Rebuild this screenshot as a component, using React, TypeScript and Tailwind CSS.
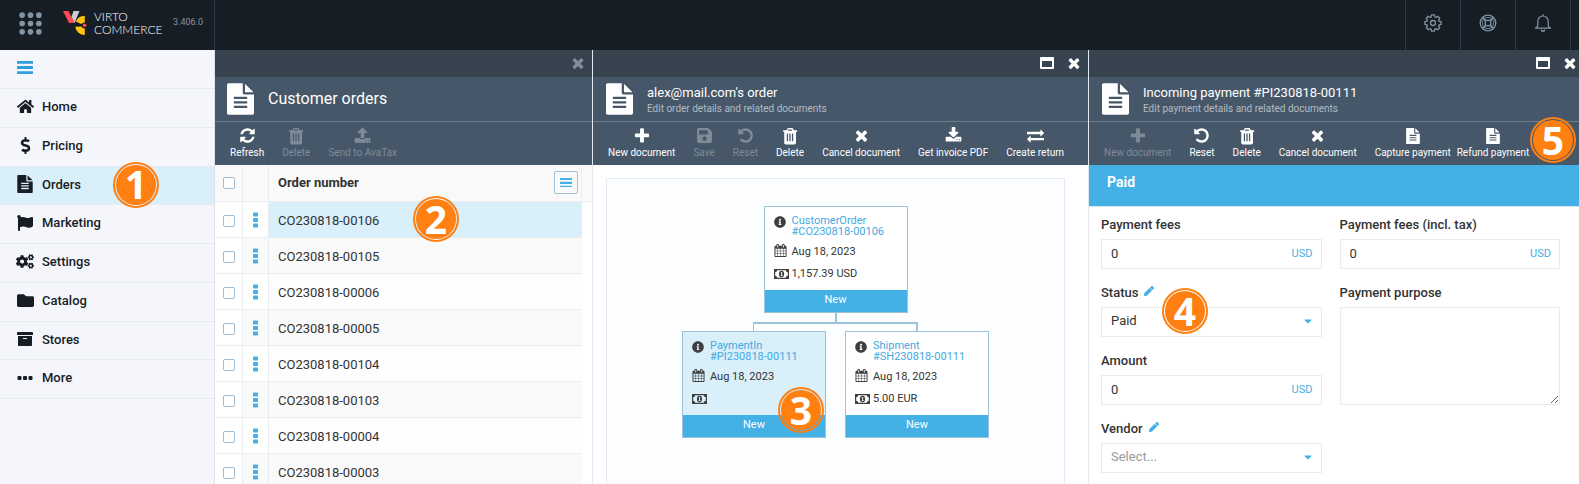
import React from "react";
import {
  FaArchive, FaCaretDown, FaCogs, FaDollarSign, FaFlag, FaFolder, FaHome, FaInfoCircle, FaPen, FaSave,
} from "react-icons/fa";

type IconProps = { className?: string };

const glyph = (d: string) =>
  function Glyph({ className }: IconProps) {
    return (
      <svg viewBox="0 0 1792 1792" fill="currentColor" className={className} aria-hidden="true">
        <path d={d} />
      </svg>
    );
  };

const Refresh = glyph("M1639 1056q0 5-1 7-64 268-268 434.5t-478 166.5q-146 0-282.5-55t-243.5-157l-129 129q-19 19-45 19t-45-19-19-45v-448q0-26 19-45t45-19h448q26 0 45 19t19 45-19 45l-137 137q71 66 161 102t187 36q134 0 250-65t186-179q11-17 53-117 8-23 30-23h192q13 0 22.5 9.5t9.5 22.5zm25-800v448q0 26-19 45t-45 19h-448q-26 0-45-19t-19-45 19-45l138-138q-148-137-349-137-134 0-250 65t-186 179q-11 17-53 117-8 23-30 23h-199q-13 0-22.5-9.5t-9.5-22.5v-7q65-268 270-434.5t480-166.5q146 0 284 55.5t245 156.5l130-129q19-19 45-19t45 19 19 45z");
const Plus = glyph("M1600 736v192q0 40-28 68t-68 28h-416v416q0 40-28 68t-68 28h-192q-40 0-68-28t-28-68v-416h-416q-40 0-68-28t-28-68v-192q0-40 28-68t68-28h416v-416q0-40 28-68t68-28h192q40 0 68 28t28 68v416h416q40 0 68 28t28 68z");
const Undo = glyph("M1664 896q0 156-61 298t-164 245-245 164-298 61q-172 0-327-72.5t-264-204.5q-7-10-6.5-22.5t8.5-20.5l137-138q10-9 25-9 16 2 23 12 73 95 179 147t225 52q104 0 198.5-40.5t163.5-109.5 109.5-163.5 40.5-198.5-40.5-198.5-109.5-163.5-163.5-109.5-198.5-40.5q-98 0-188 35.5t-160 101.5l137 138q31 30 14 69-17 40-59 40h-448q-26 0-45-19t-19-45v-448q0-42 40-59 39-17 69 14l130 129q107-101 244.5-156.5t284.5-55.5q156 0 298 61t245 164 164 245 61 298z");
const Times = glyph("M1490 1322q0 40-28 68l-136 136q-28 28-68 28t-68-28l-294-294-294 294q-28 28-68 28t-68-28l-136-136q-28-28-28-68t28-68l294-294-294-294q-28-28-28-68t28-68l136-136q28-28 68-28t68 28l294 294 294-294q28-28 68-28t68 28l136 136q28 28 28 68t-28 68l-294 294 294 294q28 28 28 68z");
const Trash = glyph("M704 1376v-704q0-14-9-23t-23-9h-64q-14 0-23 9t-9 23v704q0 14 9 23t23 9h64q14 0 23-9t9-23zm256 0v-704q0-14-9-23t-23-9h-64q-14 0-23 9t-9 23v704q0 14 9 23t23 9h64q14 0 23-9t9-23zm256 0v-704q0-14-9-23t-23-9h-64q-14 0-23 9t-9 23v704q0 14 9 23t23 9h64q14 0 23-9t9-23zm-544-992h448l-48-117q-7-9-17-11h-317q-10 2-17 11zm928 -30v114q0 14-9 23t-23 9h-76v1078q0 83-47 123.5t-113 40.5h-848q-66 0-113-38.5t-47-121.5v-1082h-76q-14 0-23-9t-9-23v-114q0-14 9-23t23-9h309l70-127q15-37 54-63t79-26h320q40 0 79 26t54 63l70 127h309q14 0 23 9t9 23z");
const Download = glyph("M1344 1344q0-26-19-45t-45-19-45 19-19 45 19 45 45 19 45-19 19-45zm256 0q0-26-19-45t-45-19-45 19-19 45 19 45 45 19 45-19 19-45zm128-224v320q0 40-28 68t-68 28h-1472q-40 0-68-28t-28-68v-320q0-40 28-68t68-28h465l135 136q58 56 136 56t136-56l136-136h464q40 0 68 28t28 68zm-325-569q17 41-14 70l-448 448q-18 19-45 19t-45-19l-448-448q-31-29-14-70 17-39 59-39h256v-448q0-26 19-45t45-19h256q26 0 45 19t19 45v448h256q42 0 59 39z");
const Upload = glyph("M1344 1472q0-26-19-45t-45-19-45 19-19 45 19 45 45 19 45-19 19-45zm256 0q0-26-19-45t-45-19-45 19-19 45 19 45 45 19 45-19 19-45zm128-224v320q0 40-28 68t-68 28h-1472q-40 0-68-28t-28-68v-320q0-40 28-68t68-28h427q21 56 70.5 92t110.5 36h256q61 0 110.5-36t70.5-92h427q40 0 68 28t28 68zm-325-648q-17 40-59 40h-256v448q0 26-19 45t-45 19h-256q-26 0-45-19t-19-45v-448h-256q-42 0-59-40-17-39 14-69l448-448q18-19 45-19t45 19l448 448q31 30 14 69z");
const Exchange = glyph("M1792 1184v192q0 13-9.5 22.5t-22.5 9.5h-1376v192q0 13-9.5 22.5t-22.5 9.5q-12 0-24-10l-319-320q-9-9-9-22 0-14 9-23l320-320q9-9 23-9 13 0 22.5 9.5t9.5 22.5v192h1376q13 0 22.5 9.5t9.5 22.5zm0-544q0 14-9 23l-320 320q-9 9-23 9-13 0-22.5-9.5t-9.5-22.5v-192h-1376q-13 0-22.5-9.5t-9.5-22.5v-192q0-13 9.5-22.5t22.5-9.5h1376v-192q0-14 9-23t23-9q12 0 24 10l319 319q9 9 9 23z");
const Calendar = glyph("M192 1664h288v-288h-288v288zm352 0h320v-288h-320v288zm-352-352h288v-320h-288v320zm352 0h320v-320h-320v320zm-352-384h288v-288h-288v288zm736 736h320v-288h-320v288zm-384-736h320v-288h-320v288zm768 736h288v-288h-288v288zm-384-352h320v-320h-320v320zm-352-864v-288q0-13-9.5-22.5t-22.5-9.5h-64q-13 0-22.5 9.5t-9.5 22.5v288q0 13 9.5 22.5t22.5 9.5h64q13 0 22.5-9.5t9.5-22.5zm736 864h288v-320h-288v320zm-384-384h320v-288h-320v288zm384 0h288v-288h-288v288zm32-480v-288q0-13-9.5-22.5t-22.5-9.5h-64q-13 0-22.5 9.5t-9.5 22.5v288q0 13 9.5 22.5t22.5 9.5h64q13 0 22.5-9.5t9.5-22.5zm384-64v1280q0 52-38 90t-90 38h-1408q-52 0-90-38t-38-90v-1280q0-52 38-90t90-38h128v-96q0-66 47-113t113-47h64q66 0 113 47t47 113v96h384v-96q0-66 47-113t113-47h64q66 0 113 47t47 113v96h128q52 0 90 38t38 90z");

function FileText({ className }: IconProps) {
  return (
    <svg viewBox="128 0 1536 1792" fill="currentColor" className={className} aria-hidden="true">
      <path d="M1596 476q14 14 28 36h-472v-472q22 14 36 28zm-476 164h544v1056q0 40-28 68t-68 28h-1344q-40 0-68-28t-28-68v-1600q0-40 28-68t68-28h800v544q0 40 28 68t68 28zm160 736v-64q0-14-9-23t-23-9h-704q-14 0-23 9t-9 23v64q0 14 9 23t23 9h704q14 0 23-9t9-23zm0-256v-64q0-14-9-23t-23-9h-704q-14 0-23 9t-9 23v64q0 14 9 23t23 9h704q14 0 23-9t9-23zm0-256v-64q0-14-9-23t-23-9h-704q-14 0-23 9t-9 23v64q0 14 9 23t23 9h704q14 0 23-9t9-23z" />
    </svg>
  );
}

function Money({ className }: IconProps) {
  return (
    <svg viewBox="0 0 15 10" className={className} aria-hidden="true">
      <path fill="none" stroke="currentColor" strokeWidth="1.2" d="M.6.6h13.8v8.8H.6z" />
      <path fill="currentColor" d="M1 1h2.2A2.2 2.2 0 0 1 1 3.200zM14 1h-2.200A2.200 2.200 0 0 0 14 3.200zM1 9h2.200A2.200 2.200 0 0 0 1 6.800zM14 9h-2.200A2.200 2.200 0 0 1 14 6.800z" />
      <ellipse cx="7.500" cy="5" rx="2.600" ry="3.300" fill="currentColor" />
      <path fill="#fff" d="M7.200 3.100h.9v3.200h.6v.7H6.700v-.7h.6V4.200h-.6z" />
    </svg>
  );
}

function Dots({ className }: IconProps) {
  return (
    <svg viewBox="0 0 16 4" fill="currentColor" className={className} aria-hidden="true">
      <rect x="0.500" width="4" height="4" rx="1" />
      <rect x="6" width="4" height="4" rx="1" />
      <rect x="11.500" width="4" height="4" rx="1" />
    </svg>
  );
}

function VerticalDots({ className }: IconProps) {
  return (
    <svg viewBox="0 0 5 16" fill="currentColor" className={className} aria-hidden="true">
      <rect width="5" height="4" rx=".8" y=".5" />
      <rect width="5" height="4" rx=".8" y="6" />
      <rect width="5" height="4" rx=".8" y="11.500" />
    </svg>
  );
}

function Bars({ className }: IconProps) {
  return (
    <svg viewBox="0 0 16 13" fill="currentColor" className={className} aria-hidden="true">
      <rect width="16" height="2.800" rx=".4" />
      <rect y="5.100" width="16" height="2.800" rx=".4" />
      <rect y="10.200" width="16" height="2.800" rx=".4" />
    </svg>
  );
}

function Maximize({ className }: IconProps) {
  return (
    <svg viewBox="0 0 14 12" fill="currentColor" fillRule="evenodd" className={className} aria-hidden="true">
      <path d="M1 0h12a1 1 0 0 1 1 1v10a1 1 0 0 1-1 1H1a1 1 0 0 1-1-1V1a1 1 0 0 1 1-1zm1 4v6h10V4z" />
    </svg>
  );
}

function AppsGrid({ className }: IconProps) {
  return (
    <svg viewBox="0 0 22 22" fill="currentColor" className={className} aria-hidden="true">
      {[3, 11, 19].map((y) => [3, 11, 19].map((x) => <circle key={`${x}-${y}`} cx={x} cy={y} r="2.700" />))}
    </svg>
  );
}

const gearOutline = Array.from({ length: 8 }, (_, k) =>
  [[-17, 6.3], [-10, 8.2], [10, 8.2], [17, 6.3]]
    .map(([a, r]) => {
      const t = ((k * 45 + a) * Math.PI) / 180;
      return `${(r * Math.cos(t)).toFixed(2)},${(r * Math.sin(t)).toFixed(2)}`;
    })
    .join(" "),
).join(" ");

function Gear({ className }: IconProps) {
  return (
    <svg viewBox="-9 -9 18 18" fill="none" stroke="currentColor" strokeWidth="1.300" strokeLinejoin="round" className={className} aria-hidden="true">
      <polygon points={gearOutline} />
      <circle r="2.500" />
    </svg>
  );
}

function LifeBuoy({ className }: IconProps) {
  return (
    <svg viewBox="-9 -9 18 18" fill="none" stroke="currentColor" strokeWidth="1.300" className={className} aria-hidden="true">
      <circle r="7.800" />
      <rect x="-2.700" y="-2.700" width="5.400" height="5.400" rx="1.600" />
      <path d="M-3.200-5Q0-6.200 3.200-5M-3.200 5Q0 6.200 3.200 5M-5-3.200Q-6.200 0-5 3.200M5-3.200Q6.200 0 5 3.200" strokeWidth=".8" />
      <path d="M-5.300-5.300l3 3M5.300-5.300l-3 3M-5.300 5.300l3-3M5.300 5.300l-3-3" strokeWidth="1.800" />
    </svg>
  );
}

function Bell({ className }: IconProps) {
  return (
    <svg viewBox="-9 -9 18 18" fill="none" stroke="currentColor" strokeWidth="1.200" strokeLinecap="round" strokeLinejoin="round" className={className} aria-hidden="true">
      <path d="M0-8.300v1.300M-7.700 5.200H7.700C6 4.600 5.200 3.200 5.200 1.500V-1.800a5.200 5.200 0 0 0-10.400 0V1.500C-5.200 3.200-6 4.600-7.700 5.200z" />
      <path d="M-1.600 7.200q1.600 2 3.200 0" strokeWidth="1.500" />
    </svg>
  );
}

function LogoMark({ className }: IconProps) {
  return (
    <svg viewBox="0 0 24 24" className={className} aria-hidden="true">
      <path fill="#ff4a4f" d="M0 0h5.500l6 12H6z" />
      <path fill="#c9ced2" d="M10.500 0H16.500l-5 12-3-6.300z" />
      <path fill="#ffc20e" d="M21.800 5v6.500a3.600 3.600 0 0 0-3.400 1.500l-5.600-2.600A9.500 9.500 0 0 1 21.800 5z" />
      <path fill="#ffc20e" d="M21.800 24v-6.500a3.600 3.600 0 0 1-3.400-1.900l-6.200.2A9.600 9.600 0 0 0 21.800 24z" />
      <circle cx="21.600" cy="14.300" r="1.800" fill="#ff4a4f" />
    </svg>
  );
}

function Badge({ n, className }: { n: number; className: string }) {
  return (
    <span className={`absolute z-10 size-[46px] rounded-full border-2 border-[#ff7f11] p-px ${className}`}>
      <span className="flex size-full items-center justify-center rounded-full bg-[#ff7f11] pb-[2px] font-['Open_Sans',sans-serif] text-[39px] leading-none font-bold text-white">
        {n}
      </span>
    </span>
  );
}

const nav = [
  { label: "Home", icon: <FaHome className="size-[17px]" /> },
  { label: "Pricing", icon: <FaDollarSign className="size-[17px]" /> },
  { label: "Orders", icon: <FileText className="h-[18px] w-4" />, active: true },
  { label: "Marketing", icon: <FaFlag className="size-4" /> },
  { label: "Settings", icon: <FaCogs className="size-[19px]" /> },
  { label: "Catalog", icon: <FaFolder className="size-[17px]" /> },
  { label: "Stores", icon: <FaArchive className="size-4" /> },
  { label: "More", icon: <Dots className="w-4" /> },
];

type Action = { label: string; icon: React.ReactNode; off?: boolean };

const doc = <FileText className="h-4 w-[14px]" />;
const cross = <Times className="size-[17px]" />;
const trash = <Trash className="size-[18px]" />;
const plus = <Plus className="size-[18px]" />;
const undo = <Undo className="size-[17px]" />;

function Blade({ className, tools = "pr-[6px]", title, subtitle, actions, actionsEnd, closeOff, children }: {
  className: string; tools?: string; title: string; subtitle?: string; actions: Action[]; actionsEnd?: React.ReactNode; closeOff?: boolean; children: React.ReactNode;
}) {
  return (
    <section className={`flex min-w-0 flex-col border-r border-[#e4e9f0] bg-white ${className}`}>
      <div className={`flex h-[27px] shrink-0 items-center justify-end gap-3 bg-[#37444f] pb-[2px] text-white ${tools}`}>
        {!closeOff && (
          <button aria-label="Maximize"><Maximize className="h-3 w-[14px]" /></button>
        )}
        <button aria-label="Close" className={closeOff ? "text-[#838e98]" : ""}><Times className="size-4" /></button>
      </div>
      <header className={`flex h-[45px] shrink-0 items-center gap-[14px] border-b border-[#6b7c8b] bg-[#465769] text-white ${subtitle ? "px-[13px]" : "px-3"}`}>
        <FileText className="h-8 w-[27px]" />
        {subtitle ? (
          <div className="pt-1">
            <h2 className="text-[13px] leading-4">{title}</h2>
            <p className="text-[10px] leading-4 text-[#b3bbc3]">{subtitle}</p>
          </div>
        ) : (
          <h2 className="text-base">{title}</h2>
        )}
      </header>
      <div className="relative flex h-[43px] shrink-0 gap-[18px] bg-[#465769] px-[15px] pt-1 text-[10px] whitespace-nowrap">
        {actions.map((a) => (
          <button key={a.label} disabled={a.off} className={`flex flex-col items-center leading-4 ${a.off ? "text-[#7f8b97]" : "text-white"}`}>
            <span className="flex h-[19px] items-center">{a.icon}</span>
            {a.label}
          </button>
        ))}
        {actionsEnd}
      </div>
      {children}
    </section>
  );
}

const orders = ["CO230818-00106", "CO230818-00105", "CO230818-00006", "CO230818-00005", "CO230818-00104", "CO230818-00103", "CO230818-00004", "CO230818-00003"];

const checkbox = "block size-3 appearance-none rounded-[2px] border border-[#9dbdd6] bg-white";

function OrdersTable() {
  return (
    <div className="relative min-h-0 flex-1 overflow-hidden">
      <table className="w-full table-fixed border-separate border-spacing-0 text-left text-[13px] text-[#333]">
        <colgroup>
          <col className="w-7" />
          <col className="w-[26px]" />
          <col />
          <col className="w-[10px]" />
        </colgroup>
        <thead className="bg-[#f9f9f9]">
          <tr>
            <th className="h-[37px] border-r border-b border-[#eaedf3] pb-px pl-2"><input type="checkbox" aria-label="Select all" className={checkbox} /></th>
            <th className="border-r border-b border-[#eaedf3]" />
            <th className="border-r border-b border-[#eaedf3] pr-[3px] pb-px pl-[9px] font-bold">
              <div className="flex items-center justify-between">
                Order number
                <button aria-label="Columns" className="flex h-[23px] w-6 items-center justify-center rounded-[2px] border border-[#9dc3da] text-[#43b0e6]">
                  <Bars className="w-3" />
                </button>
              </div>
            </th>
            <th className="border-b border-[#eaedf3]" />
          </tr>
        </thead>
        <tbody>
          {orders.map((o, i) => (
            <tr key={o}>
              <td className="h-9 border-r border-b border-[#eaedf3] pt-[3px] pl-2"><input type="checkbox" aria-label={`Select ${o}`} className={checkbox} /></td>
              <td className={`border-r border-b border-[#eaedf3] ${i % 2 ? "bg-[#f9f9f9]" : "bg-white"}`}>
                <button aria-label={`Actions for ${o}`} className="mx-auto block text-[#43b0e6]"><VerticalDots className="h-4 w-[5px]" /></button>
              </td>
              <td className={`border-b border-[#eaedf3] pt-[3px] pl-[9px] ${i === 0 ? "bg-[#d9effa]" : i % 2 ? "bg-[#f9f9f9]" : "bg-[#fdfdfd]"}`}>{o}</td>
              <td />
            </tr>
          ))}
        </tbody>
      </table>
      <Badge n={2} className="top-[31px] left-[198px]" />
    </div>
  );
}

function Card({ kind, no, sum, active, children }: { kind: string; no: string; sum?: string; active?: boolean; children?: React.ReactNode }) {
  return (
    <article className={`relative w-36 border border-[#9cc3da] text-[11px] text-[#333] ${active ? "bg-[#d9effa]" : "bg-white"}`}>
      <div className="grid grid-cols-[18px_1fr] items-center pt-2 pl-[9px]">
        <FaInfoCircle className="mt-px size-[12px] self-start text-[#3f3f3f]" />
        <a href="#" className="leading-[11px] text-[#43a9e0]">{kind}<br />{no}</a>
        <Calendar className="size-[13px] text-[#3f3f3f]" />
        <span className="mt-1 flex h-[22px] items-center">Aug 18, 2023</span>
        <Money className="h-[10px] w-[15px] text-[#3f3f3f]" />
        <span className="flex h-[22px] items-center">{sum}</span>
      </div>
      <footer className="mt-[5px] h-[22px] bg-[#43b0e6] text-center leading-[19px] text-white">New</footer>
      {children}
    </article>
  );
}

const box = "w-full border border-[#e8eaf3] bg-white";

function Field({ id, label, edit, className = "", children }: { id: string; label: string; edit?: boolean; className?: string; children: React.ReactNode }) {
  return (
    <div className={`relative flex flex-col ${className}`}>
      <div className="flex h-[23px] items-start gap-[6px] leading-[18px]">
        <label htmlFor={id} className="font-medium">{label}</label>
        {edit && <button aria-label={`Edit ${label}`} className="pt-[2px] text-[#43b0e6]"><FaPen className="size-[10px]" /></button>}
      </div>
      {children}
    </div>
  );
}

function MoneyInput({ id }: { id: string }) {
  return (
    <div className={`flex h-[30px] items-center pr-2 pl-[9px] ${box}`}>
      <input id={id} defaultValue="0" className="w-full min-w-0 flex-1 pb-px outline-none" />
      <span className="text-[11px] text-[#43b0e6]">USD</span>
    </div>
  );
}

function Picker({ id, value, muted }: { id: string; value: string; muted?: boolean }) {
  return (
    <div className="relative">
      <select id={id} className={`h-[30px] appearance-none px-[9px] pb-[2px] ${box} ${muted ? "text-[#999]" : ""}`}>
        <option>{value}</option>
      </select>
      <FaCaretDown className="pointer-events-none absolute top-[8px] right-2 size-3 text-[#43b0e6]" />
    </div>
  );
}

export default function App() {
  return (
    <div className="flex h-screen flex-col overflow-hidden bg-white font-[Roboto,sans-serif] text-[13px] text-[#333]">
      <div className="flex h-[50px] shrink-0 bg-[#161d25] text-[#8394a5]">
        <div className="flex w-[215px] items-center border-r border-[#2c3947] pr-[11px] pb-1 pl-[19px]">
          <button aria-label="Applications"><AppsGrid className="size-[23px]" /></button>
          <LogoMark className="ml-[21px] size-6" />
          <span className="ml-[7px] font-[Lato,sans-serif] text-[12px] leading-[13px] font-light text-white">VIRTO<br />COMMERCE</span>
          <span className="ml-auto text-[9px]">3.406.0</span>
        </div>
        <div className="ml-auto flex pr-2">
          <button aria-label="Settings" className="flex w-[55px] items-center justify-center border-l border-[#2c3947] pb-1"><Gear className="size-[18px]" /></button>
          <button aria-label="Help" className="flex w-[55px] items-center justify-center border-l border-[#2c3947] pb-1"><LifeBuoy className="size-[18px]" /></button>
          <button aria-label="Notifications" className="flex w-14 items-center justify-center border-x border-[#2c3947] pb-1"><Bell className="size-[18px]" /></button>
        </div>
      </div>

      <div className="flex min-h-0 flex-1">
        <nav className="w-[215px] shrink-0 border-r border-[#dde3ea] bg-[#f4f6fb] text-[#161d25]">
          <div className="flex h-[39px] items-center border-b border-[#e8eaf2] pb-[3px] pl-[17px]">
            <button aria-label="Toggle menu" className="text-[#2f9fdb]"><Bars className="w-4" /></button>
          </div>
          <ul className="grid h-[310px] grid-rows-8 font-medium">
            {nav.map((n) => (
              <li key={n.label} className={`relative border-b border-[#e8eaf2] ${n.active ? "bg-[#d9effa]" : ""}`}>
                <a href="#" className="flex h-full items-center gap-2 pb-[2px] pl-4">
                  <span className="flex w-[18px] justify-center">{n.icon}</span>
                  {n.label}
                </a>
                {n.active && <Badge n={1} className="-top-[5px] left-[113px]" />}
              </li>
            ))}
          </ul>
        </nav>

        <Blade
          className="w-[378px] shrink-0"
          title="Customer orders"
          closeOff
          actions={[
            { label: "Refresh", icon: <Refresh className="size-[17px]" /> },
            { label: "Delete", icon: trash, off: true },
            { label: "Send to AvaTax", icon: <Upload className="size-[17px]" />, off: true },
          ]}
        >
          <OrdersTable />
        </Blade>

        <Blade
          className="w-[496px] shrink-0"
          title="alex@mail.com's order"
          subtitle="Edit order details and related documents"
          actions={[
            { label: "New document", icon: plus },
            { label: "Save", icon: <FaSave className="size-[17px]" />, off: true },
            { label: "Reset", icon: undo, off: true },
            { label: "Delete", icon: trash },
            { label: "Cancel document", icon: cross },
            { label: "Get invoice PDF", icon: <Download className="size-[17px]" /> },
            { label: "Create return", icon: <Exchange className="size-[17px]" /> },
          ]}
        >
          <div className="flex min-h-0 flex-1 pt-[13px] pr-[23px] pl-[13px]">
            <div className="flex flex-1 flex-col items-center border border-b-0 border-[#e3eaf2] bg-[#fcfdff] pt-[27px]">
              <Card kind="CustomerOrder" no="#CO230818-00106" sum="1,157.39 USD" />
              <div className="h-[9px] w-[2px] bg-[#9cc3da]" />
              <div className="h-[9px] w-[165px] border-t-2 border-r-2 border-l border-[#9cc3da]" />
              <div className="flex gap-[19px]">
                <Card kind="PaymentIn" no="#PI230818-00111" active>
                  <Badge n={3} className="right-px bottom-1" />
                </Card>
                <Card kind="Shipment" no="#SH230818-00111" sum="5.00 EUR" />
              </div>
            </div>
          </div>
        </Blade>

        <Blade
          className="flex-1 border-r-0"
          tools="pr-px"
          title="Incoming payment #PI230818-00111"
          subtitle="Edit payment details and related documents"
          actions={[
            { label: "New document", icon: plus, off: true },
            { label: "Reset", icon: undo },
            { label: "Delete", icon: trash },
            { label: "Cancel document", icon: cross },
            { label: "Capture payment", icon: doc },
          ]}
          actionsEnd={
            <>
              <button className="-ml-3 flex flex-col items-center leading-4 text-white">
                <span className="flex h-[19px] items-center">{doc}</span>
                Refund payment
              </button>
              <Badge n={5} className="-top-[5px] right-[3px]" />
            </>
          }
        >
          <div className="h-[42px] shrink-0 border-b border-[#dfe4ea] bg-[#43b0e6] px-[18px] pt-[7px] text-sm font-bold text-white">Paid</div>
          <form className="grid grid-cols-2 content-start gap-x-[18px] gap-y-[15px] pt-[9px] pr-[19px] pl-3">
            <Field id="fees" label="Payment fees"><MoneyInput id="fees" /></Field>
            <Field id="feesTax" label="Payment fees (incl. tax)"><MoneyInput id="feesTax" /></Field>
            <Field id="status" label="Status" edit>
              <Picker id="status" value="Paid" />
              <Badge n={4} className="top-1 left-[61px]" />
            </Field>
            <Field id="purpose" label="Payment purpose" className="row-span-2">
              <textarea id="purpose" className={`flex-1 resize-y outline-none ${box}`} />
            </Field>
            <Field id="amount" label="Amount"><MoneyInput id="amount" /></Field>
            <Field id="vendor" label="Vendor" edit><Picker id="vendor" value="Select..." muted /></Field>
          </form>
        </Blade>
      </div>
    </div>
  );
}
